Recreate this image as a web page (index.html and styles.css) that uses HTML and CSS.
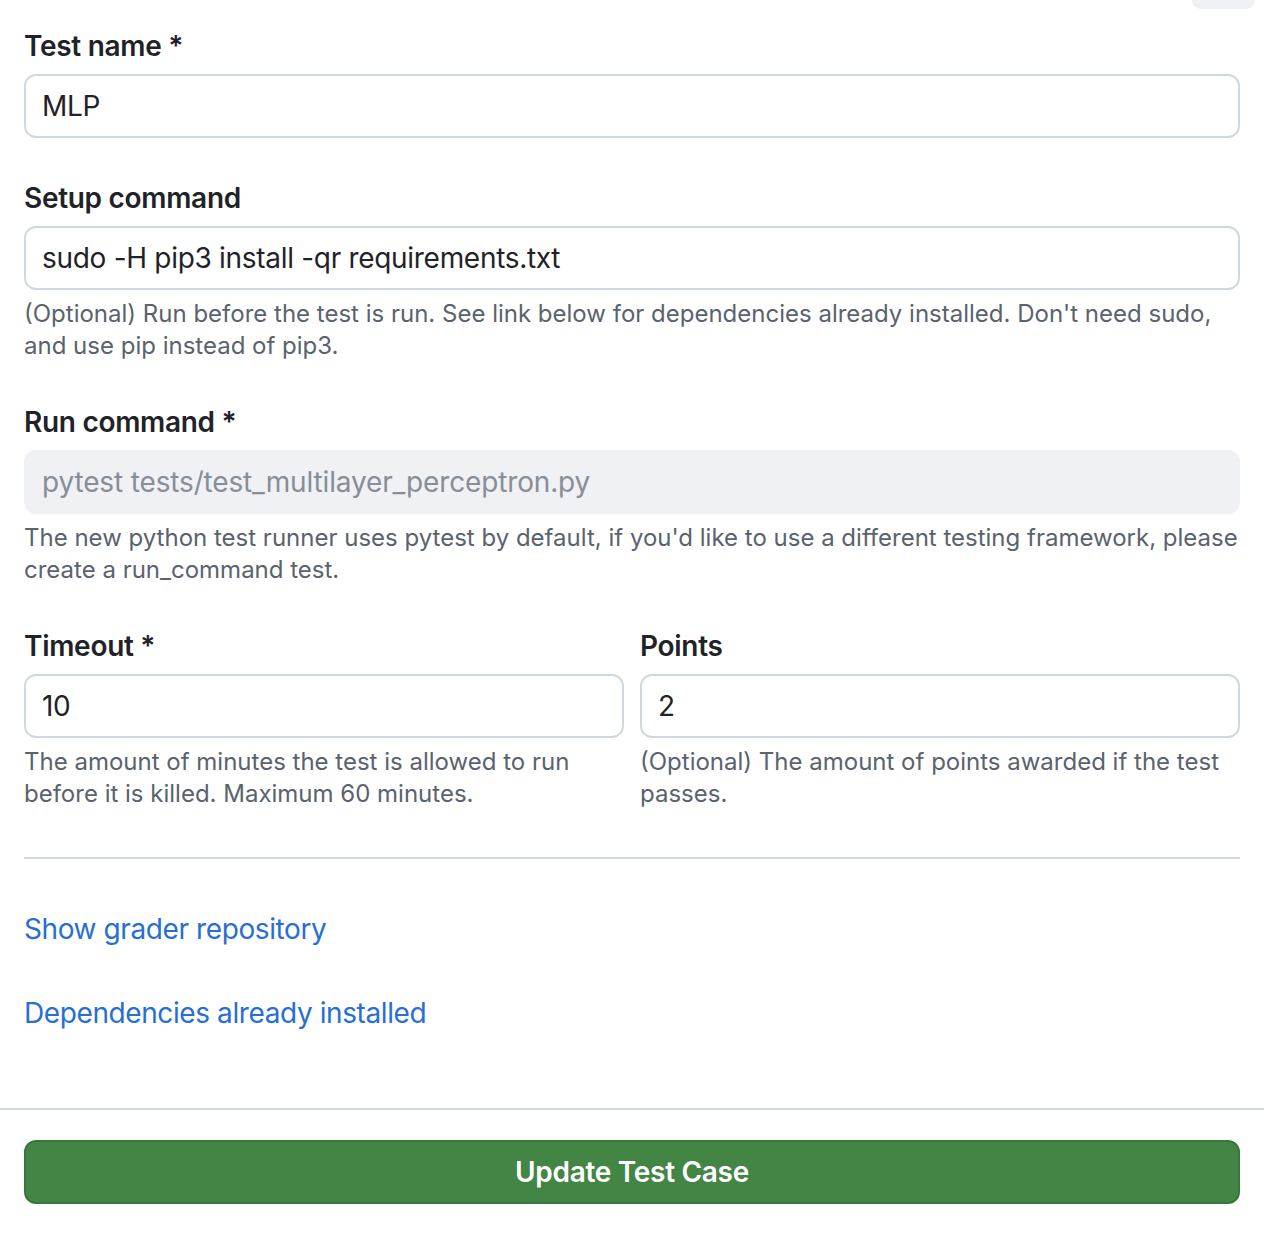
FILE: index.html
```html
<!DOCTYPE html>
<html>
<head>
<meta charset="utf-8">
<link rel="stylesheet" href="styles.css">
</head>
<body>
<div class="topbar"><span class="tab-stub"></span></div>
<form class="form">
  <div class="group">
    <label class="label">Test name *</label>
    <input class="input" type="text" value="MLP">
  </div>
  <div class="group">
    <label class="label">Setup command</label>
    <input class="input" type="text" value="sudo -H pip3 install -qr requirements.txt">
    <p class="help">(Optional) Run before the test is run. See link below for dependencies already installed. Don't need sudo, and use pip instead of pip3.</p>
  </div>
  <div class="group">
    <label class="label">Run command *</label>
    <input class="input disabled" type="text" value="pytest tests/test_multilayer_perceptron.py" disabled>
    <p class="help">The new python test runner uses pytest by default, if you'd like to use a different testing framework, please create a run_command test.</p>
  </div>
  <div class="row">
    <div class="col">
      <label class="label">Timeout *</label>
      <input class="input" type="text" value="10">
      <p class="help">The amount of minutes the test is allowed to run before it is killed. Maximum 60 minutes.</p>
    </div>
    <div class="col">
      <label class="label">Points</label>
      <input class="input" type="text" value="2">
      <p class="help">(Optional) The amount of points awarded if the test passes.</p>
    </div>
  </div>
  <hr class="divider">
  <div class="links">
    <a class="link" href="#">Show grader repository</a>
    <a class="link" href="#">Dependencies already installed</a>
  </div>
</form>
<div class="footer">
  <button class="btn" type="button">Update Test Case</button>
</div>
</body>
</html>
```
FILE: styles.css
```css
* { box-sizing: border-box; }
html, body { margin: 0; padding: 0; background: #fff; }
body {
  font-family: Inter, "Noto Sans", "Liberation Sans", sans-serif;
  color: #1f2328;
  width: 1264px;
}
.topbar {
  height: 26px;
  display: flex;
  justify-content: flex-end;
  padding-right: 9px;
}
.tab-stub {
  display: block;
  width: 63px;
  height: 9px;
  background: #eff1f4;
  border-radius: 0 0 12px 12px;
}
.form { padding: 0 24px; margin: 0; }
.group { margin-bottom: 40px; display: flex; flex-direction: column; }
.label {
  display: block;
  font-size: 28px;
  font-weight: 600;
  line-height: 40px;
  letter-spacing: -0.3px;
  margin-bottom: 8px;
}
.input {
  display: block;
  width: 100%;
  height: 64px;
  border: 2px solid #d1d9e0;
  border-radius: 12px;
  padding: 0 16px;
  font-family: inherit;
  font-size: 28px;
  letter-spacing: -0.3px;
  color: #1f2328;
  background: #fff;
  outline: none;
}
.input.disabled {
  background: #eff1f4;
  border-color: #eff1f4;
  color: #878e97;
  letter-spacing: -0.15px;
}
.help {
  margin: 8px 0 0;
  font-size: 24px;
  line-height: 32px;
  color: #59636e;
}
.row { display: flex; gap: 16px; }
.col { flex: 1; display: flex; flex-direction: column; }
.divider {
  border: 0;
  height: 2px;
  background: #d1d9e0;
  margin: 47px 0 0;
}
.links {
  display: flex;
  flex-direction: column;
  align-items: flex-start;
  padding-top: 50px;
  gap: 44px;
}
.link {
  font-size: 28px;
  line-height: 40px;
  letter-spacing: -0.4px;
  color: #276ed6;
  text-decoration: none;
}
.footer {
  margin-top: 75px;
  border-top: 2px solid #d1d9e0;
  padding: 30px 24px 30px;
}
.btn {
  display: block;
  width: 100%;
  height: 64px;
  background: #438544;
  border: 2px solid #3a763b;
  border-radius: 12px;
  color: #fff;
  font-family: inherit;
  font-size: 28px;
  font-weight: 600;
  letter-spacing: -0.3px;
}
```
